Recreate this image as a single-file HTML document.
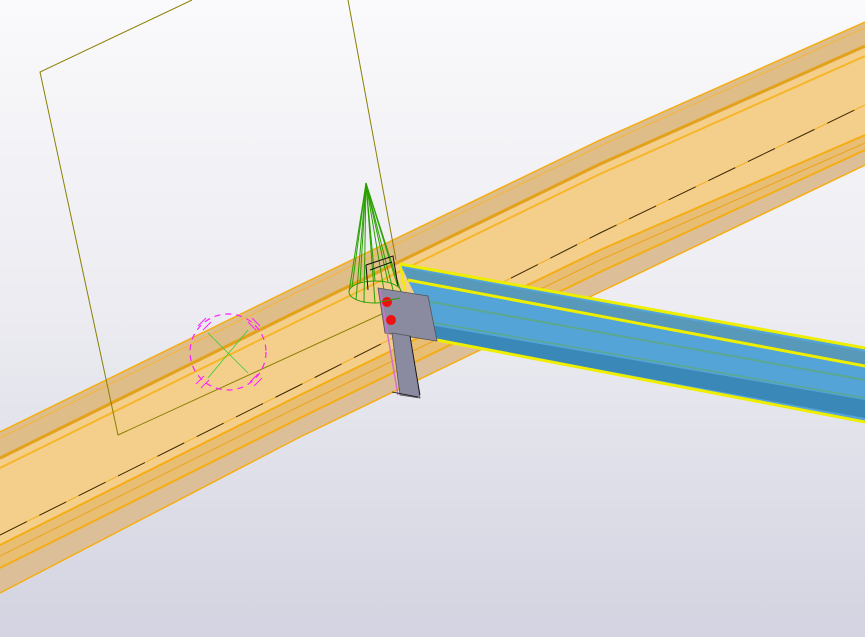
<!DOCTYPE html>
<html><head><style>
html,body{margin:0;padding:0;width:865px;height:637px;overflow:hidden}
</style></head><body>
<svg width="865" height="637" viewBox="0 0 865 637" xmlns="http://www.w3.org/2000/svg">
<defs>
<linearGradient id="bg" x1="0" y1="0" x2="0" y2="1">
<stop offset="0" stop-color="#fafafc"/><stop offset="0.5" stop-color="#ebebf1"/><stop offset="1" stop-color="#d3d3e1"/>
</linearGradient>
</defs>
<rect width="865" height="637" fill="url(#bg)"/>
<!-- orange beam -->
<polygon points="0,432 300,285 600,140 865,22 865,165 600,292 300,437 0,593" fill="#f4cf8c"/>
<!-- top flange -->
<polygon points="0,432 300,285 600,140 865,22 865,48 600,166 300,312 0,460" fill="#dfbd88"/>
<polyline points="0,458 300,310 600,164 865,46" fill="none" stroke="#e3a21a" stroke-width="3"/>
<polyline points="0,468 300,320 600,174 865,56" fill="none" stroke="#f7b52a" stroke-width="2"/>
<polyline points="0,438 300,291 600,146 865,28" fill="none" stroke="#f5b53a" stroke-width="1"/>
<!-- bottom flange -->
<polygon points="0,545 300,395 600,250 865,135 865,165 600,292 300,437 0,593" fill="#e8be74"/>
<polygon points="0,568 300,418 600,272 865,150 865,165 600,292 300,437 0,593" fill="#dcbf98"/>
<polyline points="0,545 300,395 600,250 865,135" fill="none" stroke="#f5ad14" stroke-width="2"/>
<polyline points="0,556 300,406 600,260 865,143" fill="none" stroke="#eea21a" stroke-width="1"/>
<polyline points="0,568 300,418 600,272 865,150" fill="none" stroke="#f5ad14" stroke-width="2"/>
<polyline points="0,593 300,437 600,292 865,165" fill="none" stroke="#f5ad14" stroke-width="1.5"/>
<polyline points="0,432 300,285 600,140 865,22" fill="none" stroke="#f5ad14" stroke-width="1.5"/>
<!-- centerline -->
<polyline points="0,535 300,385 600,233 865,105" fill="none" stroke="#f5ad14" stroke-width="1"/>
<polyline points="0,535 300,385 600,233 865,105" fill="none" stroke="#3a2a10" stroke-width="1" stroke-dasharray="30,14"/>
<!-- plane (visible through beam) -->
<polyline points="192,0 40,72 118,435 395,308" fill="none" stroke="#8a8000" stroke-width="1"/>
<line x1="348" y1="0" x2="396" y2="260" stroke="#8a8000" stroke-width="1"/>
<!-- magenta circle -->
<circle cx="228" cy="352" r="38" fill="none" stroke="#ff20ff" stroke-width="1.2" stroke-dasharray="6,5"/>
<line x1="208" y1="333" x2="248" y2="373" stroke="#33cc33" stroke-width="0.8"/>
<line x1="248" y1="330" x2="208" y2="378" stroke="#33cc33" stroke-width="0.8"/>
<g stroke="#ff20ff" stroke-width="1"><line x1="198" y1="326" x2="206" y2="318"/><line x1="203" y1="330" x2="211" y2="322"/><line x1="248" y1="322" x2="256" y2="330"/><line x1="252" y1="318" x2="260" y2="326"/><line x1="196" y1="384" x2="204" y2="376"/><line x1="201" y1="388" x2="209" y2="380"/><line x1="250" y1="382" x2="258" y2="374"/><line x1="254" y1="386" x2="262" y2="378"/></g>
<!-- cone -->
<g stroke="#2aa000" stroke-width="1" fill="none">
<ellipse cx="375" cy="292" rx="26" ry="11"/>
<line x1="366" y1="183" x2="349" y2="292"/><line x1="366" y1="183" x2="356" y2="300"/><line x1="366" y1="183" x2="364" y2="303"/><line x1="366" y1="183" x2="375" y2="303"/><line x1="366" y1="183" x2="386" y2="302"/><line x1="366" y1="183" x2="395" y2="298"/><line x1="366" y1="183" x2="401" y2="292"/><line x1="366" y1="183" x2="397" y2="284"/><line x1="366" y1="183" x2="388" y2="282"/><line x1="366" y1="183" x2="375" y2="281"/><line x1="366" y1="183" x2="360" y2="283"/><line x1="366" y1="183" x2="352" y2="287"/>
</g>
<!-- blue beam -->
<polygon points="400,264 865,348 865,422 437,340" fill="#54a4d8"/>
<polygon points="404,268 865,352 865,366 408,281" fill="#5898b8"/>
<polygon points="430,325 865,400 865,418 437,340" fill="#3a88b8"/>
<line x1="420" y1="300" x2="865" y2="380" stroke="#5aa890" stroke-width="2"/>
<line x1="430" y1="322" x2="865" y2="398" stroke="#5aa890" stroke-width="1.5"/>
<line x1="400" y1="264" x2="865" y2="348" stroke="#eeee00" stroke-width="3"/>
<line x1="408" y1="280" x2="865" y2="366" stroke="#eeee00" stroke-width="3"/>
<line x1="437" y1="340" x2="865" y2="422" stroke="#eeee00" stroke-width="3"/>
<line x1="400" y1="264" x2="405" y2="290" stroke="#eeee00" stroke-width="2.5"/>
<!-- black wire -->
<polyline points="366,265 393,256 398,286" fill="none" stroke="#111" stroke-width="1"/>
<polyline points="370,270 392,262" fill="none" stroke="#111" stroke-width="1"/>
<line x1="366" y1="265" x2="368" y2="290" stroke="#111" stroke-width="1"/>
<!-- plate -->
<polygon points="378,288 428,296 437,341 385,333" fill="#8a8aa0" stroke="#555" stroke-width="0.8"/>
<polygon points="392,333 410,336 420,398 400,395" fill="#8a8aa0" stroke="#555" stroke-width="0.8"/>
<line x1="380" y1="290" x2="398" y2="395" stroke="#d070d0" stroke-width="1.5"/>
<line x1="410" y1="336" x2="420" y2="395" stroke="#111" stroke-width="0.8"/>
<line x1="392" y1="392" x2="418" y2="397" stroke="#111" stroke-width="0.8"/>
<circle cx="387" cy="302" r="5" fill="#ee1111"/>
<circle cx="391" cy="320" r="5" fill="#ee1111"/>
<line x1="380" y1="302" x2="400" y2="298" stroke="#2aa000" stroke-width="1"/>
</svg>
</body></html>
